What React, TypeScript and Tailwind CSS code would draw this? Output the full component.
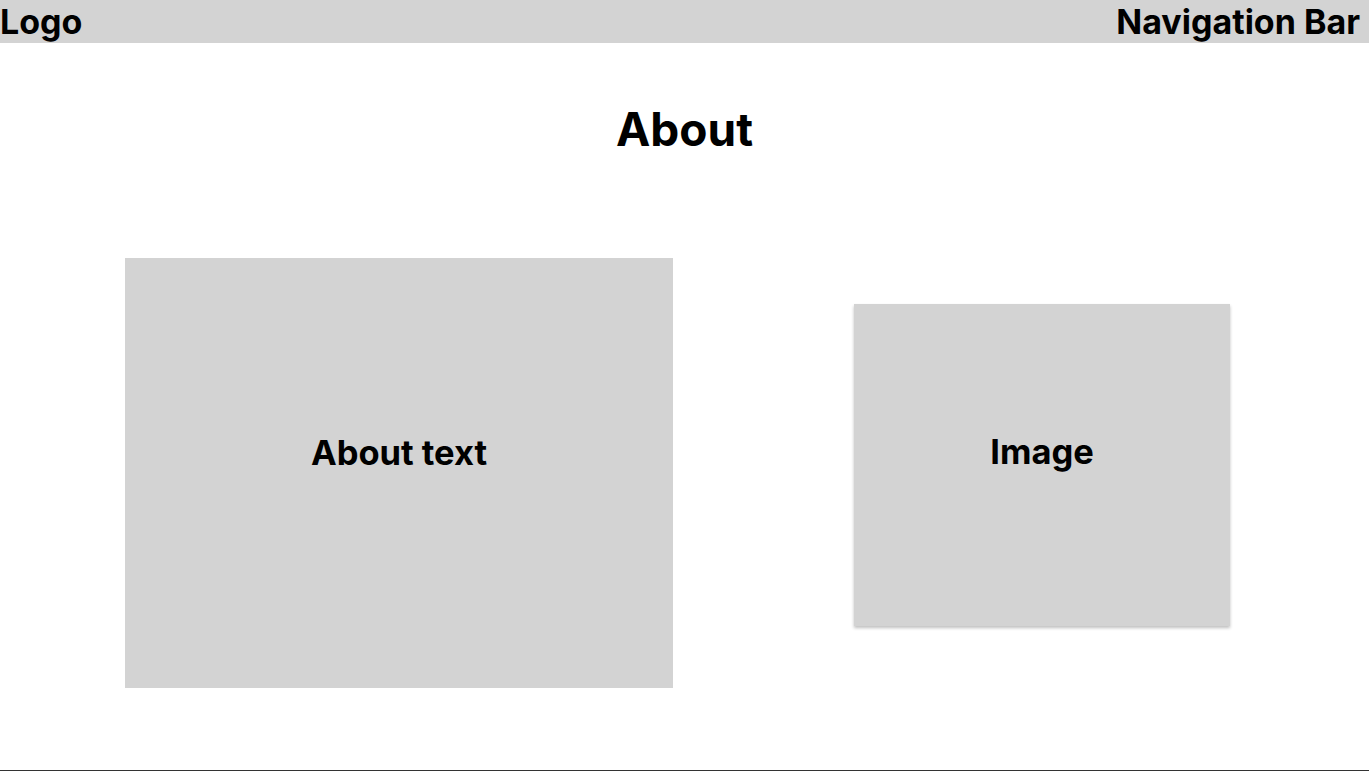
export default function App() {
  return (
    <div
      className="flex flex-col min-h-[772px] bg-white text-black"
      style={{ fontFamily: "Inter, 'Liberation Sans', sans-serif" }}
    >
      <header className="flex h-[43px] items-center justify-between bg-[#d3d3d3] pr-[9px]">
        <div className="text-[34px] font-bold leading-none">Logo</div>
        <div className="text-[34px] font-bold leading-none">Navigation Bar</div>
      </header>
      <main className="flex flex-1 flex-col">
        <h1 className="mt-[60px] text-center text-[46px] font-bold leading-[52px]">About</h1>
        <div className="mt-[103px] flex items-start pl-[125px]">
          <div className="flex h-[430px] w-[548px] items-start justify-center bg-[#d3d3d3] pt-[175px]">
            <span className="text-[34.5px] font-bold leading-[40px]">About text</span>
          </div>
          <div className="ml-[181px] mt-[46px] flex h-[322px] w-[376px] items-start justify-center bg-[#d3d3d3] pt-[128px] shadow-[0_2px_3px_rgba(0,0,0,0.25)]">
            <span className="text-[34.5px] font-bold leading-[40px]">Image</span>
          </div>
        </div>
      </main>
      <footer className="h-[2px] border-t border-[#333]"></footer>
    </div>
  );
}
